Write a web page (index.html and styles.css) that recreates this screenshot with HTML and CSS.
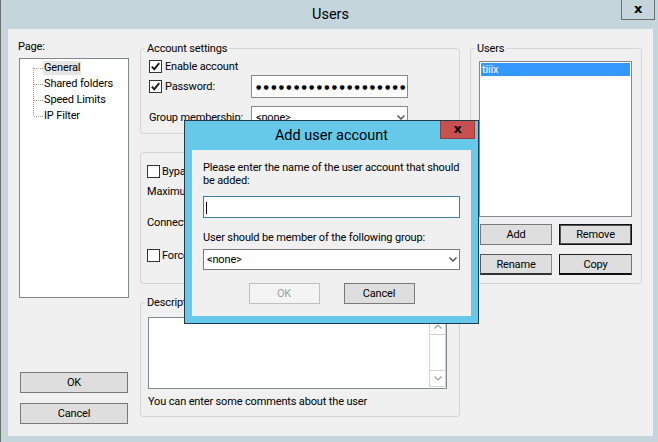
FILE: index.html
```html
<!DOCTYPE html>
<html>
<head>
<meta charset="utf-8">
<link rel="stylesheet" href="styles.css">
</head>
<body>
<div class="window">
  <div class="titlebar">
    <span></span>
    <span class="title">Users</span>
    <div class="close-main">x</div>
  </div>
  <div class="client">
    <div class="col-left">
      <div class="page-label">Page:</div>
      <ul class="tree">
        <li class="sel"><span>General</span></li>
        <li><span>Shared folders</span></li>
        <li><span>Speed Limits</span></li>
        <li><span>IP Filter</span></li>
      </ul>
      <div class="left-buttons">
        <div class="btn wide">OK</div>
        <div class="btn wide">Cancel</div>
      </div>
    </div>

    <div class="col-mid">
      <div class="group g-account">
        <div class="legend">Account settings</div>
        <div class="gbody">
          <div class="row r-enable">
            <div class="lbl"><span class="cb"><svg viewBox="0 0 11 11" width="11" height="11"><path d="M1.8 5.6 L4.3 8.2 L9.2 2.2" /></svg></span>Enable account</div>
          </div>
          <div class="row r-pass">
            <div class="lbl"><span class="cb"><svg viewBox="0 0 11 11" width="11" height="11"><path d="M1.8 5.6 L4.3 8.2 L9.2 2.2" /></svg></span>Password:</div>
            <div class="field pw">●●●●●●●●●●●●●●●●●●●●●●●●●</div>
          </div>
          <div class="row r-group">
            <div class="lbl">Group membership:</div>
            <div class="field combo"><span>&lt;none&gt;</span><svg class="chev" viewBox="0 0 8 5" width="8" height="5"><path d="M0.5 0.5 L4 4 L7.5 0.5"/></svg></div>
          </div>
        </div>
      </div>

      <div class="group g-limits">
        <div class="gbody">
          <div class="row l1"><div class="lbl"><span class="cb"></span>Bypass server userlimit</div></div>
          <div class="row l2"><div class="lbl wide-lbl">Maximum connection count:</div></div>
          <div class="row l3"><div class="lbl wide-lbl">Connection limit per IP:</div></div>
          <div class="row l4"><div class="lbl"><span class="cb"></span>Force SSL for user login</div></div>
        </div>
      </div>

      <div class="group g-desc">
        <div class="legend">Description</div>
        <div class="gbody">
          <div class="textarea">
            <div class="sb">
              <div class="sb-btn"><svg viewBox="0 0 8 5" width="8" height="5"><path d="M0.5 4.5 L4 1 L7.5 4.5"/></svg></div>
              <div class="sb-btn down"><svg viewBox="0 0 8 5" width="8" height="5"><path d="M0.5 0.5 L4 4 L7.5 0.5"/></svg></div>
            </div>
          </div>
          <div class="hint">You can enter some comments about the user</div>
        </div>
      </div>
    </div>

    <div class="col-right">
      <div class="group g-users">
        <div class="legend">Users</div>
        <div class="listbox"><div class="list-sel">tiiix</div></div>
        <div class="ubtns">
          <div class="btn b-add">Add</div>
          <div class="btn b-remove">Remove</div>
        </div>
        <div class="ubtns second">
          <div class="btn b-add b-rename">Rename</div>
          <div class="btn b-remove b-copy">Copy</div>
        </div>
      </div>
    </div>
  </div>

  <div class="dialog">
    <div class="dlg-title">
      <span></span>
      <span class="title">Add user account</span>
      <div class="close-red">x</div>
    </div>
    <div class="dlg-client">
      <div class="dlg-text">Please enter the name of the user account that should<br>be added:</div>
      <div class="dlg-input"><span class="caret"></span></div>
      <div class="dlg-label">User should be member of the following group:</div>
      <div class="dlg-select"><span>&lt;none&gt;</span><svg class="chev" viewBox="0 0 8 5" width="8" height="5"><path d="M0.5 0.5 L4 4 L7.5 0.5"/></svg></div>
      <div class="dlg-buttons">
        <div class="btn dbtn disabled">OK</div>
        <div class="btn dbtn">Cancel</div>
      </div>
    </div>
  </div>
</div>
</body>
</html>
```

FILE: styles.css
```css
* { box-sizing: border-box; }

body {
  margin: 0;
  font-family: Roboto, "Liberation Sans", sans-serif;
  font-size: 11px;
  letter-spacing: -0.15px;
  color: #000;
}

.window {
  position: relative;
  width: 658px;
  height: 442px;
  overflow: hidden;
  background: #c4d6dc;
  border-left: 1px solid #6e6e6e;
  padding: 0 5px 0 7px;
}

.titlebar {
  height: 29px;
  display: grid;
  grid-template-columns: 1fr auto 1fr;
  align-items: start;
}

.title {
  font-size: 14.5px;
  line-height: 29px;
  letter-spacing: 0;
}

.close-main {
  justify-self: end;
  margin-right: -2px;
  width: 34px;
  height: 20px;
  border: 1px solid #6e6e6e;
  border-top: 0;
  display: flex;
  align-items: center;
  justify-content: center;
  font-family: "DejaVu Sans", sans-serif;
  font-weight: bold;
  font-size: 13px;
  line-height: 1;
  padding-bottom: 2px;
}

.client {
  height: 407px;
  background: #f0f0f0;
  display: flex;
  padding-left: 10px;
}

/* left column */
.col-left {
  width: 111px;
  padding-top: 11px;
  display: flex;
  flex-direction: column;
}

.page-label { line-height: 14px; }

.tree {
  margin: 4px 0 0 1px;
  height: 240px;
  border: 1px solid #828790;
  background: #fff;
  padding: 1px 0 0 13px;
  list-style: none;
}

.tree li {
  height: 16px;
  display: flex;
  align-items: center;
  background: repeating-linear-gradient(to bottom, #9a9a9a 0 1px, transparent 1px 2px) 0 0 / 1px 100% no-repeat;
}

.tree li:first-child { background-position: 0 8px; background-size: 1px 8px; }
.tree li:last-child { background-size: 1px 8px; }

.tree li::before {
  content: "";
  width: 9px;
  margin-left: 1px;
  border-top: 1px dotted #9a9a9a;
}

.tree li span {
  padding: 0 1px;
  line-height: 14px;
  white-space: nowrap;
}

.tree li.sel span { background: #e6e6e6; }

.left-buttons {
  margin-top: 74px;
  padding-left: 2px;
  display: flex;
  flex-direction: column;
  gap: 10px;
}

.btn {
  height: 21px;
  background: #dedede;
  border: 1px solid #7a7a7a;
  display: flex;
  align-items: center;
  justify-content: center;
  white-space: nowrap;
}

.btn.wide { width: 108px; }

/* middle column */
.col-mid {
  width: 320px;
  margin-left: 11px;
  padding-top: 19px;
  display: flex;
  flex-direction: column;
}

.group {
  border: 1px solid #d6d6d6;
  border-radius: 3px;
}

.legend {
  width: fit-content;
  margin: -8px 0 0 4px;
  padding: 0 2px;
  height: 15px;
  line-height: 15px;
  background: #f0f0f0;
}

.row {
  display: flex;
  align-items: center;
  white-space: nowrap;
}

.lbl {
  width: 102px;
  display: flex;
  align-items: center;
  gap: 3px;
  flex: none;
}

.wide-lbl { width: auto; }

.cb {
  width: 13px;
  height: 13px;
  border: 1px solid #333;
  background: #fff;
  flex: none;
  display: flex;
  align-items: center;
  justify-content: center;
}

.cb path {
  fill: none;
  stroke: #1a1a1a;
  stroke-width: 1.9;
}

.g-account { height: 86px; }
.g-account .gbody { padding-left: 8px; }
.r-enable { margin-top: 2px; height: 17px; }
.r-pass { height: 23px; }
.r-group { margin-top: 8px; height: 22px; }

.field {
  width: 157px;
  height: 100%;
  border: 1px solid #8a8a8a;
  background: #fff;
}

.pw {
  overflow: hidden;
  padding-left: 4px;
  font-family: "DejaVu Sans", sans-serif;
  font-size: 6px;
  letter-spacing: 2.35px;
  line-height: 21px;
}

.combo {
  display: flex;
  align-items: center;
  justify-content: space-between;
  padding: 0 2px 0 4px;
}

.chev path {
  fill: none;
  stroke: #555;
  stroke-width: 1.5;
}

.g-limits { margin-top: 18px; height: 132px; }
.g-limits .gbody { padding-left: 6px; }
.l1 { margin-top: 9px; height: 18px; }
.l1 .lbl, .l4 .lbl { gap: 2px; width: auto; }
.l2 { margin-top: 2px; height: 18px; }
.l3 { margin-top: 11px; height: 22px; }
.l4 { margin-top: 13px; height: 18px; }

.g-desc { margin-top: 18px; height: 115px; }
.g-desc .gbody { padding-left: 7px; }

.textarea {
  margin-top: 7px;
  width: 299px;
  height: 72px;
  border: 1px solid #828790;
  background: #fff;
  display: flex;
  justify-content: flex-end;
}

.sb {
  width: 17px;
  margin-bottom: 1px;
  border-left: 1px solid #d2d2d2;
  border-right: 1px solid #d2d2d2;
  display: flex;
  flex-direction: column;
  justify-content: space-between;
}

.sb-btn {
  height: 17px;
  border-bottom: 1px solid #d2d2d2;
  display: flex;
  align-items: center;
  justify-content: center;
}

.sb-btn.down { border-top: 1px solid #d2d2d2; }

.sb-btn path {
  fill: none;
  stroke: #9a9a9a;
  stroke-width: 1.1;
}

.hint {
  margin-top: 6px;
  line-height: 14px;
}

/* right column */
.col-right {
  width: 172px;
  margin-left: 10px;
  padding-top: 19px;
}

.g-users { height: 236px; }

.listbox {
  margin: 5px 0 0 8px;
  width: 153px;
  height: 156px;
  border: 1px solid #828790;
  background: #fff;
  padding: 1px;
}

.list-sel {
  height: 13px;
  line-height: 13px;
  background: #3399ff;
  color: #fff;
  padding-left: 1px;
}

.ubtns {
  display: flex;
  gap: 7px;
  margin: 7px 0 0 9px;
}

.ubtns.second { margin-top: 9px; }

.b-add { width: 72px; }
.b-remove {
  width: 73px;
  border-color: #111;
  box-shadow: inset 0 0 0 1px #555;
}

.b-rename {
  border-color: #5a5a5a #8a8a8a #333 #5a5a5a;
  border-bottom-width: 2px;
}
.b-copy {
  border-color: #222 #7a7a7a #111 #111;
  border-width: 1px 1px 2px 1px;
  box-shadow: none;
}

/* dialog */
.dialog {
  position: absolute;
  left: 183px;
  top: 120px;
  width: 295px;
  height: 204px;
  background: #66c9ea;
  border: 1px solid #1f3a48;
  display: flex;
  flex-direction: column;
}

.dlg-title {
  height: 29px;
  display: grid;
  grid-template-columns: 1fr auto 1fr;
  align-items: start;
}

.close-red {
  justify-self: end;
  margin-right: 3px;
  width: 35px;
  height: 18px;
  background: #c75050;
  border: 1px solid #9c3a3a;
  border-top: 0;
  display: flex;
  align-items: center;
  justify-content: center;
  font-family: "DejaVu Sans", sans-serif;
  font-weight: bold;
  font-size: 13px;
  line-height: 1;
  padding-bottom: 2px;
}

.dlg-client {
  margin: 0 7px;
  height: 166px;
  background: #f0f0f0;
  padding: 11px 11px 0;
}

.dlg-text {
  line-height: 13px;
  white-space: nowrap;
}

.dlg-input {
  margin-top: 9px;
  height: 22px;
  border: 1px solid #3c7fb1;
  background: #fff;
  padding: 5px 0 0 2px;
}

.caret {
  display: block;
  width: 1px;
  height: 12px;
  background: #000;
}

.dlg-label {
  margin-top: 13px;
  line-height: 13px;
  white-space: nowrap;
}

.dlg-select {
  margin-top: 5px;
  height: 21px;
  border: 1px solid #7a7a7a;
  background: #fff;
  display: flex;
  align-items: center;
  justify-content: space-between;
  padding: 0 2px 0 3px;
}

.dlg-buttons {
  margin-top: 13px;
  display: flex;
  justify-content: center;
  gap: 24px;
}

.dbtn { width: 71px; }

.dbtn.disabled {
  background: #f4f4f4;
  border-color: #bfbfbf;
  color: #a0a0a0;
}
```
